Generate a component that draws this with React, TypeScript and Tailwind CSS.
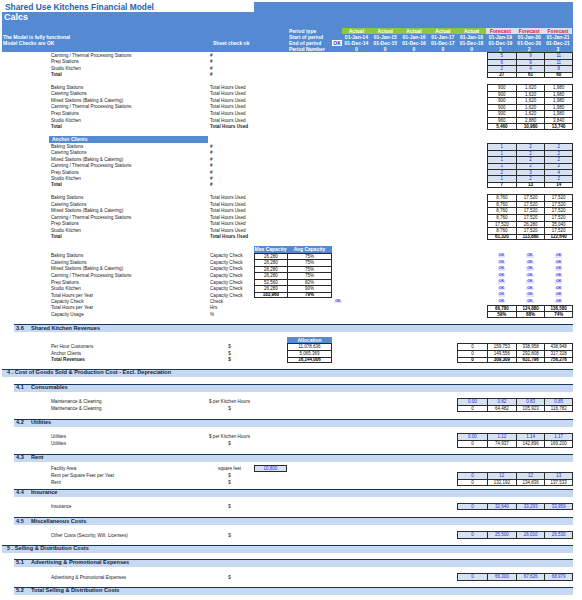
import React from "react";

const FONT = "font-['Liberation_Sans',Arial,sans-serif]";
const BLUE = "bg-[#538ad2]";

type Kind = "input" | "calc" | "total" | "ok";

function Cell({ w, v, kind, last, right }: { w: string; v: string; kind: Kind; last?: boolean; right?: boolean }) {
  if (kind === "ok") {
    return (
      <div className={`${w} h-full flex items-center justify-center`}>
        <span className="text-[3.6px] leading-none px-[1px] bg-[#e4e4ff] text-[#4040e8] font-bold">{v}</span>
      </div>
    );
  }
  const look =
    kind === "input"
      ? "bg-[#d6e2f2] text-[#2c2cdc]"
      : kind === "total"
      ? "bg-white text-black font-bold"
      : "bg-white text-[#111]";
  return (
    <div
      className={`${w} h-full box-border border-l border-t border-[#2b2b2b] ${last ? "border-b" : ""} ${
        right ? "border-r" : ""
      } ${look} flex items-center justify-center pt-[1px] text-[4.5px] leading-none`}
    >
      {v}
    </div>
  );
}

type RowProps = {
  h: string;
  label?: string;
  bold?: boolean;
  unit?: string;
  center?: boolean;
  vals?: string[];
  kind?: Kind;
  last?: boolean;
  cap?: string[];
  capKind?: Kind;
  capLast?: boolean;
  alloc?: string;
  allocKind?: Kind;
  allocLast?: boolean;
  facility?: string;
  sideOk?: boolean;
};

function Row({ h, label, bold, unit, center, vals, kind = "calc", last, cap, capKind = "calc", capLast, alloc, allocKind = "calc", allocLast, facility, sideOk }: RowProps) {
  return (
    <div className={`${h} flex text-[4.65px] leading-none text-[#1a1a1a]`}>
      <div className="w-[51px] shrink-0" />
      <div className={`w-[154px] shrink-0 pt-[1.5px] flex items-center whitespace-nowrap ${bold ? "font-bold" : ""}`}>{label}</div>
      <div className={`w-[49px] shrink-0 pt-[1.5px] flex items-center whitespace-nowrap ${center ? "justify-center" : "pl-[5px]"} ${bold ? "font-bold" : ""}`}>
        {unit}
      </div>
      <div className="w-[33px] shrink-0 h-full">
        {cap && <Cell w="w-full" v={cap[0]} kind={capKind} last={capLast} />}
        {facility && <Cell w="w-full" v={facility} kind="input" last right />}
      </div>
      <div className="w-[45px] shrink-0 h-full">
        {cap && <Cell w="w-full" v={cap[1]} kind={capKind} last={capLast} right />}
        {alloc && <Cell w="w-full" v={alloc} kind={allocKind} last={allocLast} right />}
      </div>
      <div className="w-[125px] shrink-0 h-full pl-[1px]">
        {sideOk && <Cell w="w-[10px]" v="OK" kind="ok" />}
      </div>
      <div className="w-[30px] shrink-0 h-full">
        {vals && vals.length === 4 && <Cell w="w-full" v={vals[0]} kind={kind} last={last} />}
      </div>
      {vals &&
        vals.slice(vals.length - 3).map((v, i) => (
          <Cell key={i} w="w-[28.7px] shrink-0" v={v} kind={kind} last={last} right={i === 2} />
        ))}
    </div>
  );
}

function Gap({ h }: { h: string }) {
  return <div className={h} />;
}

function Section({ num, title, major }: { num: string; title: string; major?: boolean }) {
  return (
    <div
      className={`h-[8px] box-border bg-[#c6d9f1] border-t-[1.5px] border-[#17375e] flex items-center text-[5.6px] leading-none text-[#14233c] font-bold ${
        major ? "ml-[2px] w-[571px] pl-[5px]" : "ml-[14px] w-[559px] pl-[2px]"
      }`}
    >
      {major ? (
        <span className="whitespace-nowrap">{num} . {title}</span>
      ) : (
        <>
          <span className="w-[15px] shrink-0">{num}</span>
          <span className="whitespace-nowrap">{title}</span>
        </>
      )}
    </div>
  );
}

const PERIODS: [string, string, string, string][] = [
  ["Actual", "01-Jan-14", "01-Dec-14", "0"],
  ["Actual", "01-Jan-15", "01-Dec-15", "0"],
  ["Actual", "01-Jan-16", "01-Dec-16", "0"],
  ["Actual", "01-Jan-17", "01-Dec-17", "0"],
  ["Actual", "01-Jan-18", "01-Dec-18", "0"],
  ["Forecast", "01-Jan-19", "01-Dec-19", "1"],
  ["Forecast", "01-Jan-20", "01-Dec-20", "2"],
  ["Forecast", "01-Jan-21", "01-Dec-21", "3"],
];

const STATIONS = [
  "Baking Stations",
  "Catering Stations",
  "Mixed Stations (Baking & Catering)",
  "Canning / Thermal Processing Stations",
  "Prep Stations",
  "Studio Kitchen",
];

function Header() {
  const labels = ["Period type", "Start of period", "End of period", "Period Number"];
  return (
    <div className="ml-[2px] w-[571px]">
      <div className="h-[12px] flex">
        <div className={`w-[252px] text-[#1f63b4] font-bold text-[8.4px] leading-[15px] pl-[3px] whitespace-nowrap`}>
          Shared Use Kitchens Financial Model
        </div>
        <div className={`flex-1 mt-[2px] ${BLUE}`} />
      </div>
      <div className={`h-[40px] ${BLUE} text-white`}>
        <div className="h-[16px] pl-[2px] text-[9px] font-bold leading-[11px]">Calcs</div>
        {labels.map((l, r) => (
          <div key={l} className="h-[6px] flex text-[5px] leading-none font-bold">
            <div className="w-[211px] shrink-0 pl-[1px] flex items-center whitespace-nowrap">
              {r === 1 ? "The Model is fully functional" : r === 2 ? "Model Checks are OK" : ""}
            </div>
            <div className="w-[76px] shrink-0 flex items-center whitespace-nowrap">{r === 2 ? "Sheet check ok" : ""}</div>
            <div className="w-[43px] shrink-0 flex items-center whitespace-nowrap">{l}</div>
            <div className="w-[10px] shrink-0 h-full">
              {r === 2 && <div className="h-full bg-white text-[#2c2cdc] flex items-center justify-center">OK</div>}
            </div>
            {PERIODS.map((p, i) => (
              <div
                key={i}
                className={`w-[28.8px] shrink-0 h-full flex items-center justify-center whitespace-nowrap ${
                  r === 0 ? (p[0] === "Actual" ? "bg-[#8ec63f] text-white" : "bg-[#d6e2f2] text-[#e8102a]") : "text-white"
                }`}
              >
                {p[r]}
              </div>
            ))}
          </div>
        ))}
      </div>
    </div>
  );
}

export default function App() {
  const hoursA = [["900", "1,620", "1,980"], ["900", "1,620", "1,980"], ["900", "1,620", "1,980"], ["900", "1,620", "1,980"], ["900", "1,620", "1,980"], ["960", "2,880", "3,840"]];
  const anchor = [["1", "2", "2"], ["1", "2", "2"], ["1", "2", "2"], ["1", "2", "2"], ["2", "3", "4"], ["1", "2", "2"]];
  const hoursB = [["8,760", "17,520", "17,520"], ["8,760", "17,520", "17,520"], ["8,760", "17,520", "17,520"], ["8,760", "17,520", "17,520"], ["17,520", "26,280", "35,040"], ["8,760", "17,520", "17,520"]];
  const caps = [["26,280", "75%"], ["26,280", "75%"], ["26,280", "75%"], ["26,280", "75%"], ["52,560", "82%"], ["26,280", "90%"]];
  const OK3 = ["OK", "OK", "OK"];

  return (
    <div className={`w-[582px] h-[600px] overflow-hidden bg-white ${FONT}`}>
      <Header />

      <Row h="h-[6.5px]" label="Canning / Thermal Processing Stations" unit="#" vals={["5", "9", "11"]} kind="input" />
      <Row h="h-[6.5px]" label="Prep Stations" unit="#" vals={["6", "9", "11"]} kind="input" />
      <Row h="h-[6.5px]" label="Studio Kitchen" unit="#" vals={["2", "4", "8"]} kind="input" />
      <Row h="h-[6.5px]" label="Total" bold unit="#" vals={["27", "61", "60"]} kind="total" last />
      <Gap h="h-[6px]" />

      {STATIONS.map((s, i) => (
        <Row key={s} h="h-[6.57px]" label={s} unit="Total Hours Used" vals={hoursA[i]} />
      ))}
      <Row h="h-[6.58px]" label="Total" bold unit="Total Hours Used" vals={["5,460", "10,980", "13,740"]} kind="total" last />

      <Gap h="h-[6.5px]" />
      <div className={`h-[6.8px] ml-[49px] w-[159px] ${BLUE} text-white text-[5px] font-bold leading-none flex items-center pl-[3px]`}>
        Anchor Clients
      </div>

      {STATIONS.map((s, i) => (
        <Row key={s} h="h-[6.43px]" label={s} unit="#" vals={anchor[i]} kind="input" />
      ))}
      <Row h="h-[6.42px]" label="Total" bold unit="#" vals={["7", "13", "14"]} kind="total" last />
      <Gap h="h-[6px]" />

      {STATIONS.map((s, i) => (
        <Row key={s} h="h-[6.6px]" label={s} unit="Total Hours Used" vals={hoursB[i]} />
      ))}
      <Row h="h-[6.6px]" label="Total" bold unit="Total Hours Used" vals={["61,320", "113,880", "122,640"]} kind="total" last />
      <Gap h="h-[6px]" />

      <div className="h-[6.3px] flex text-[5px] leading-none font-bold text-white">
        <div className="w-[254px] shrink-0" />
        <div className={`w-[33px] shrink-0 ${BLUE} flex items-center justify-center whitespace-nowrap`}>Max Capacity</div>
        <div className={`w-[45px] shrink-0 ${BLUE} flex items-center justify-center whitespace-nowrap`}>Avg Capacity</div>
      </div>
      {STATIONS.map((s, i) => (
        <Row key={s} h="h-[6.55px]" label={s} unit="Capacity Check" cap={caps[i]} vals={OK3} kind="ok" />
      ))}
      <Row h="h-[6.55px]" label="Total Hours per Year" unit="Capacity Check" cap={["183,960", "79%"]} capKind="total" capLast vals={OK3} kind="ok" />
      <Row h="h-[6.35px]" label="Capacity Check" unit="Check" sideOk vals={OK3} kind="ok" />
      <Row h="h-[6.5px]" label="Total Hours per Year" unit="Hrs" vals={["66,780", "124,880", "136,580"]} kind="total" />
      <Row h="h-[6.5px]" label="Capacity Usage" unit="%" vals={["59%", "68%", "74%"]} kind="total" last />
      <Gap h="h-[6px]" />

      <Section num="3.6" title="Shared Kitchen Revenues" />
      <Gap h="h-[5.5px]" />
      <div className="h-[6px] flex text-[5px] leading-none font-bold text-white">
        <div className="w-[287px] shrink-0" />
        <div className={`w-[45px] shrink-0 ${BLUE} flex items-center justify-center`}>Allocation</div>
      </div>
      <Row h="h-[6.67px]" label="Per Hour Customers" unit="$" center alloc="11,078,636" vals={["0", "159,753", "338,958", "438,948"]} />
      <Row h="h-[6.67px]" label="Anchor Clients" unit="$" center alloc="5,065,369" vals={["0", "149,556", "292,808", "317,328"]} />
      <Row h="h-[6.66px]" label="Total Revenues" bold unit="$" center alloc="16,144,006" allocKind="total" allocLast vals={["0", "309,309", "631,796", "756,276"]} kind="total" last />
      <Gap h="h-[5.5px]" />

      <Section major num="4" title="Cost of Goods Sold & Production Cost - Excl. Depreciation" />
      <Gap h="h-[7px]" />
      <Section num="4.1" title="Consumables" />
      <Gap h="h-[6px]" />
      <Row h="h-[7px]" label="Maintenance & Cleaning" unit="$ per Kitchen Hours" center vals={["0.00", "0.82", "0.83", "0.85"]} kind="input" />
      <Row h="h-[7px]" label="Maintenance & Cleaning" unit="$" center vals={["0", "64,482", "105,923", "116,782"]} last />
      <Gap h="h-[7px]" />

      <Section num="4.2" title="Utilities" />
      <Gap h="h-[6px]" />
      <Row h="h-[7.5px]" label="Utilities" unit="$ per Kitchen Hours" center vals={["0.00", "1.12", "1.14", "1.17"]} kind="input" />
      <Row h="h-[7.5px]" label="Utilities" unit="$" center vals={["0", "74,937", "142,896", "169,200"]} last />
      <Gap h="h-[6px]" />

      <Section num="4.3" title="Rent" />
      <Gap h="h-[3px]" />
      <Row h="h-[7px]" label="Facility Area" unit="square feet" center facility="10,800" />
      <Row h="h-[7px]" label="Rent per Square Feet per Year" unit="$" center vals={["0", "12", "12", "13"]} kind="input" />
      <Row h="h-[7px]" label="Rent" unit="$" center vals={["0", "132,192", "134,836", "137,533"]} last />
      <Gap h="h-[3px]" />

      <Section num="4.4" title="Insurance" />
      <Gap h="h-[6.3px]" />
      <Row h="h-[7.4px]" label="Insurance" unit="$" center vals={["0", "32,640", "33,293", "33,959"]} kind="input" last />
      <Gap h="h-[6.8px]" />

      <Section num="4.5" title="Miscellaneous Costs" />
      <Gap h="h-[6.2px]" />
      <Row h="h-[7.3px]" label="Other Costs (Security, Wifi, Licenses)" unit="$" center vals={["0", "25,500", "26,010", "26,530"]} kind="input" last />
      <Gap h="h-[6px]" />

      <Section major num="5" title="Selling & Distribution Costs" />
      <Gap h="h-[6px]" />
      <Section num="5.1" title="Advertising & Promotional Expenses" />
      <Gap h="h-[6.7px]" />
      <Row h="h-[7.3px]" label="Advertising & Promotional Expenses" unit="$" center vals={["0", "66,300", "67,626", "68,979"]} kind="input" last />
      <Gap h="h-[6px]" />
      <Section num="5.2" title="Total Selling & Distribution Costs" />
    </div>
  );
}
